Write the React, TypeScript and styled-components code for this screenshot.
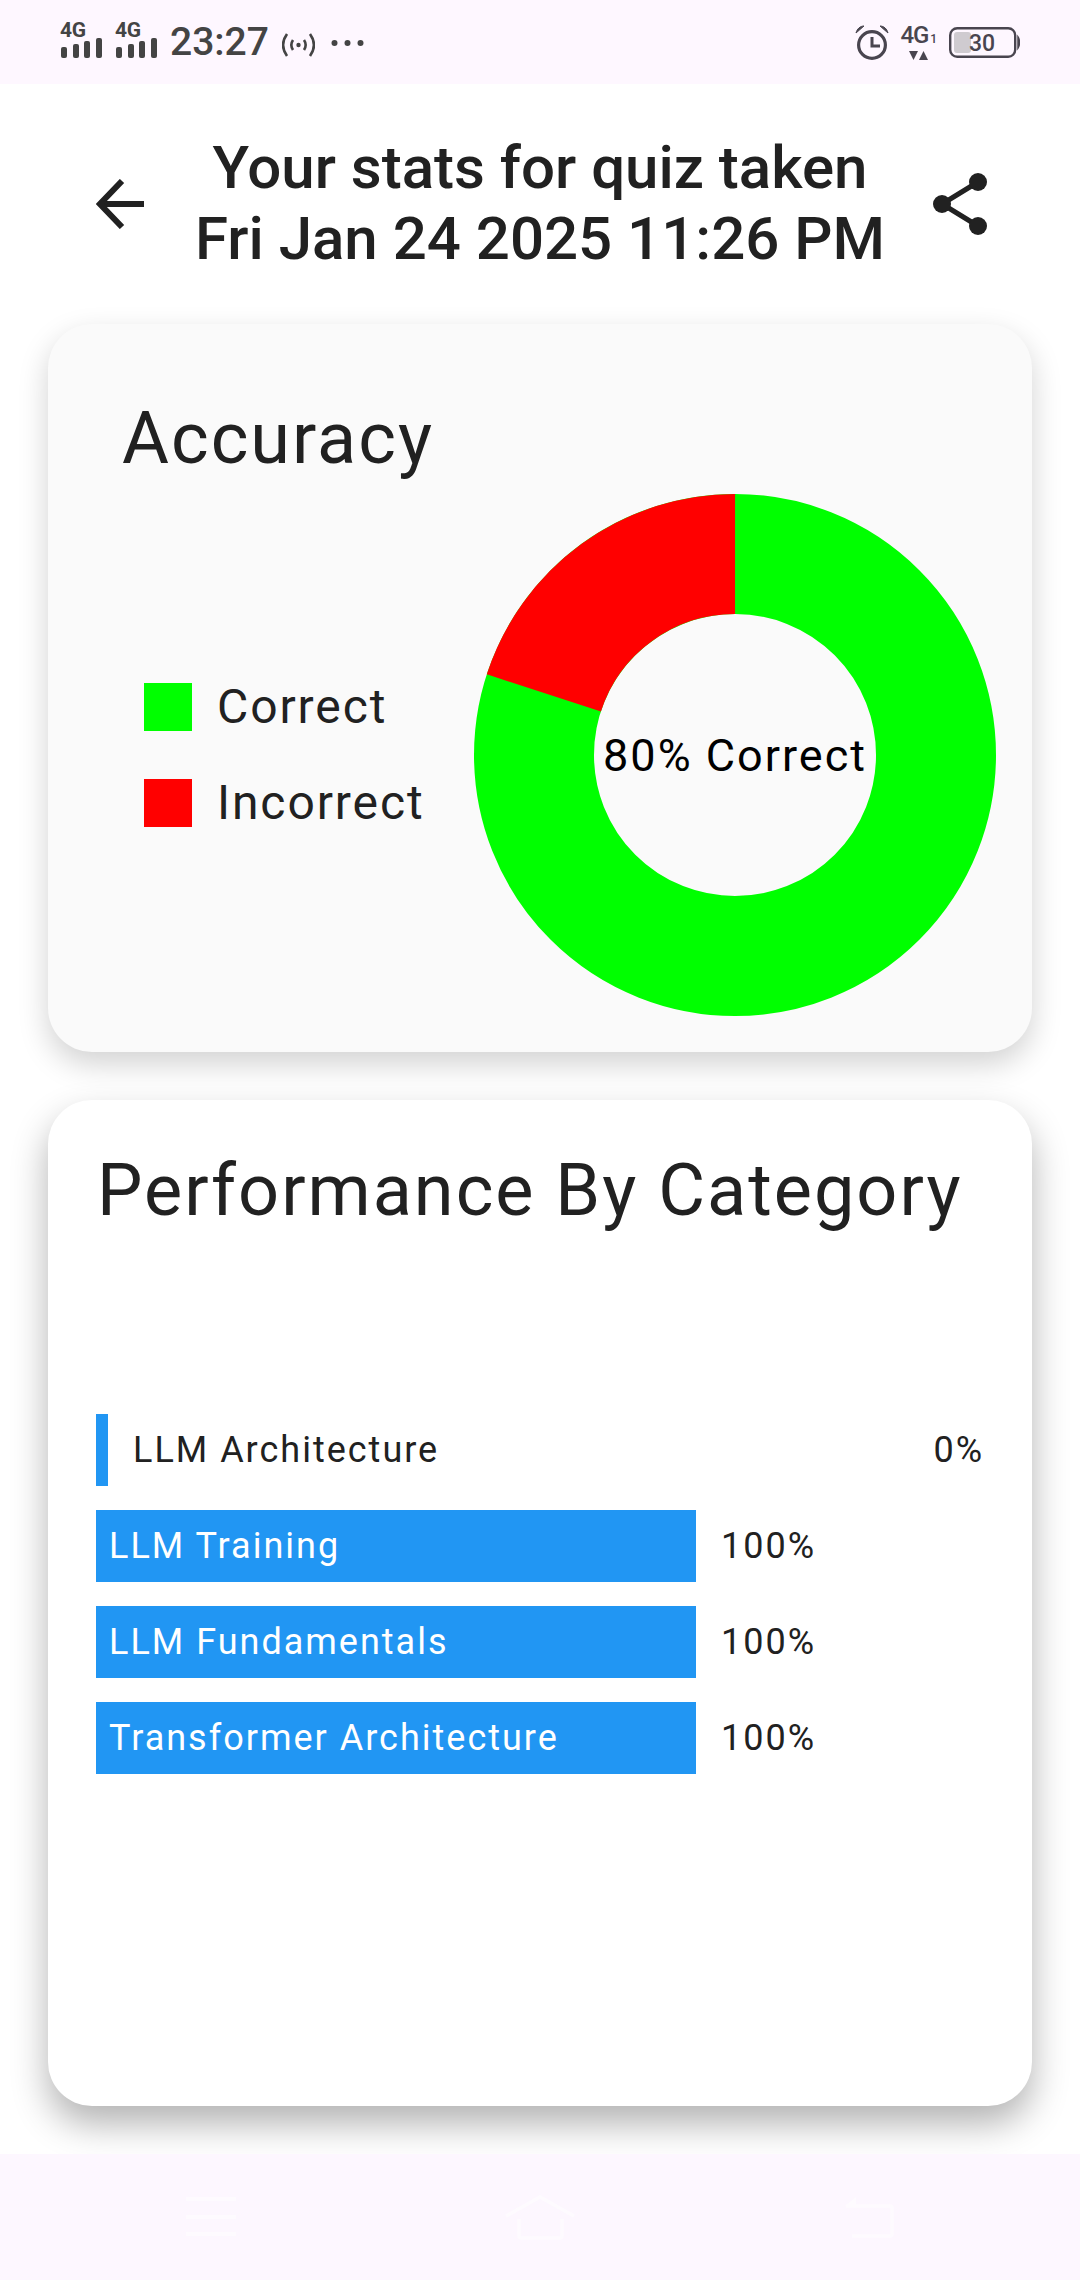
import styled, { createGlobalStyle } from 'styled-components';

const GlobalStyle = createGlobalStyle`
  html, body {
    margin: 0;
    padding: 0;
    background: #fff;
  }
  body {
    font-family: Roboto, "Liberation Sans", sans-serif;
    color: #212121;
  }
`;

const Screen = styled.div`
  width: 1080px;
  height: 2280px;
  display: flex;
  flex-direction: column;
  overflow: hidden;
  background: #fff;
`;

const StatusBar = styled.div`
  height: 84px;
  flex: none;
  background: #fef7ff;
  color: #49454f;
  display: flex;
  align-items: center;
  justify-content: space-between;
  padding: 0 60px;
  box-sizing: border-box;
`;

const StatusGroup = styled.div<{ $gap: number }>`
  display: flex;
  align-items: center;
  gap: ${p => p.$gap}px;
`;

const SignalWrap = styled.div`
  width: 42px;
  display: flex;
  flex-direction: column;
  margin-bottom: 5px;
`;

const SignalText = styled.span`
  font-size: 21px;
  line-height: 16px;
  font-weight: 700;
  letter-spacing: -0.3px;
  color: #444;
`;

const Clock = styled.span`
  font-size: 39px;
  line-height: 40px;
  font-weight: 500;
  color: #444;
`;

const WaveIcon = styled.svg`
  margin-top: 5px;
`;

const DotsIcon = styled.svg`
  margin-left: 3px;
  margin-top: 2px;
`;

const FourG = styled.div`
  display: flex;
  flex-direction: column;
  align-items: center;
`;

const FourGText = styled.span`
  font-size: 24px;
  line-height: 23px;
  font-weight: 500;
  letter-spacing: -1.2px;
  color: #49454f;

  small {
    font-size: 12px;
    letter-spacing: 0;
    margin-left: 2px;
  }
`;

const Header = styled.div`
  height: 240px;
  flex: none;
  display: flex;
  align-items: center;
  justify-content: space-between;
  padding: 0 92px;
  box-sizing: border-box;
`;

const Title = styled.h1`
  margin: 0 0 3px;
  font-size: 60px;
  line-height: 71px;
  font-weight: 500;
  text-align: center;
  color: #212121;
  white-space: nowrap;
`;

const IconButton = styled.div`
  width: 56px;
  height: 62px;
  display: flex;
  align-items: center;
  justify-content: center;
`;

const Cards = styled.div`
  flex: 1;
  padding: 0 48px;
  display: flex;
  flex-direction: column;
  gap: 48px;
`;

const Card = styled.section<{ $height: number; $bg: string; $shadow: string }>`
  height: ${p => p.$height}px;
  background: ${p => p.$bg};
  border-radius: 44px;
  box-shadow: ${p => p.$shadow};
  flex: none;
  box-sizing: border-box;
`;

const AccuracyCard = styled(Card)`
  padding: 73px 36px 0 74px;
  display: flex;
  flex-direction: column;
`;

const AccuracyTitle = styled.h2`
  margin: 0;
  font-size: 72px;
  line-height: 84px;
  font-weight: 400;
  letter-spacing: 2px;
  color: #212121;
`;

const ChartRow = styled.div`
  display: flex;
  justify-content: space-between;
  align-items: center;
  margin-top: 13px;
`;

const Legend = styled.div`
  display: flex;
  flex-direction: column;
  gap: 48px;
  margin-left: 22px;
`;

const LegendItem = styled.div`
  display: flex;
  align-items: center;
  gap: 25px;
`;

const Swatch = styled.span<{ $color: string }>`
  width: 48px;
  height: 48px;
  background: ${p => p.$color};
`;

const LegendLabel = styled.span`
  font-size: 48px;
  line-height: 48px;
  letter-spacing: 1.9px;
  color: #212121;
`;

const Donut = styled.div`
  width: 522px;
  height: 522px;
  position: relative;
`;

const DonutLabel = styled.div`
  position: absolute;
  inset: 0;
  display: flex;
  align-items: center;
  justify-content: center;
  font-size: 45px;
  letter-spacing: 2px;
  color: #000;
`;

const PerformanceCard = styled(Card)`
  padding: 49px 48px 0;
`;

const PerformanceTitle = styled.h2`
  margin: 0 0 0 1px;
  font-size: 72px;
  line-height: 84px;
  font-weight: 400;
  letter-spacing: 2px;
  color: #212121;
`;

const BarList = styled.div`
  margin-top: 181px;
  display: flex;
  flex-direction: column;
  gap: 24px;
`;

const BarRow = styled.div`
  height: 72px;
  display: flex;
  align-items: center;
`;

const BarFill = styled.div<{ $width: number }>`
  width: ${p => p.$width}px;
  height: 72px;
  flex: none;
  background: #2196f3;
  color: #fff;
  display: flex;
  align-items: center;
  white-space: nowrap;
`;

const BarText = styled.span<{ $outside?: boolean }>`
  font-size: 36px;
  letter-spacing: 2px;
  white-space: nowrap;
  margin-left: ${p => (p.$outside ? '25px' : '13px')};
  color: ${p => (p.$outside ? '#212121' : '#fff')};
`;

const BarValue = styled.span<{ $right?: boolean }>`
  font-size: 36px;
  letter-spacing: 2px;
  color: #212121;
  margin-left: ${p => (p.$right ? 'auto' : '25px')};
`;

const NavBar = styled.div`
  height: 126px;
  flex: none;
  background: #fdf7ff;
  display: flex;
  align-items: center;
  justify-content: space-between;
  padding: 0 186px;
  box-sizing: border-box;
  position: relative;
`;

const categories = [
  { name: 'LLM Architecture', value: 0 },
  { name: 'LLM Training', value: 100 },
  { name: 'LLM Fundamentals', value: 100 },
  { name: 'Transformer Architecture', value: 100 },
];

const SignalBars = () => (
  <svg width="42" height="20" viewBox="0 0 42 20" fill="#444">
    <rect x="1" y="9" width="6" height="11" rx="2" />
    <rect x="13" y="6" width="6" height="14" rx="2" />
    <rect x="24" y="3" width="6" height="17" rx="2" />
    <rect x="36" y="0" width="6" height="20" rx="2" />
  </svg>
);

const App = () => {
  return (
    <Screen>
      <GlobalStyle />
      <StatusBar>
        <StatusGroup $gap={13}>
          <SignalWrap>
            <SignalText>4G</SignalText>
            <SignalBars />
          </SignalWrap>
          <SignalWrap>
            <SignalText>4G</SignalText>
            <SignalBars />
          </SignalWrap>
          <Clock>23:27</Clock>
          <WaveIcon width="33" height="24" viewBox="0 0 33 24" fill="none" stroke="#444" strokeWidth="2.6">
            <path d="M5 1 C0 8 0 16 5 23" />
            <path d="M11 7 C9 10 9 14 11 17" />
            <circle cx="16.5" cy="12" r="2.2" fill="#444" stroke="none" />
            <path d="M22 7 C24 10 24 14 22 17" />
            <path d="M28 1 C33 8 33 16 28 23" />
          </WaveIcon>
          <DotsIcon width="33" height="8" viewBox="0 0 33 8" fill="#444">
            <circle cx="3.5" cy="4" r="3" />
            <circle cx="16.5" cy="4" r="3" />
            <circle cx="29.5" cy="4" r="3" />
          </DotsIcon>
        </StatusGroup>
        <StatusGroup $gap={12}>
          <svg width="34" height="35" viewBox="0 0 34 35" fill="none" stroke="#49454f" strokeWidth="3.2">
            <circle cx="17" cy="20" r="13.4" />
            <path d="M17 12 V21 H25" strokeWidth="3" />
            <path d="M1 8 C2 4 5 1 9 1 Z" fill="#49454f" strokeWidth="1" />
            <path d="M33 8 C32 4 29 1 25 1 Z" fill="#49454f" strokeWidth="1" />
          </svg>
          <FourG>
            <FourGText>
              4G<small>1</small>
            </FourGText>
            <svg width="19" height="10" viewBox="0 0 19 10" fill="#49454f">
              <path d="M0 0 H9 L4.5 9 Z" />
              <path d="M10 9 H19 L14.5 0 Z" />
            </svg>
          </FourG>
          <svg width="71" height="31" viewBox="0 0 71 31">
            <rect x="1.2" y="1.2" width="65" height="28.6" rx="7" fill="none" stroke="#49454f" strokeWidth="2.4" />
            <rect x="5" y="5" width="17" height="21" rx="3" fill="#cfcbd0" />
            <path d="M69 10 C71 13 71 18 69 21 Z" fill="#49454f" stroke="#49454f" strokeWidth="1.5" />
            <text x="33" y="23.5" textAnchor="middle" fontFamily="Roboto" fontSize="23" fontWeight="500" fill="#49454f">30</text>
          </svg>
        </StatusGroup>
      </StatusBar>

      <Header>
        <IconButton>
          <svg width="48" height="50" viewBox="0 0 48 50" fill="none" stroke="#212121" strokeWidth="6">
            <path d="M48 25 H4" />
            <path d="M26 2 L4 25 L26 48" />
          </svg>
        </IconButton>
        <Title>
          Your stats for quiz taken
          <br />
          Fri Jan 24 2025 11:26 PM
        </Title>
        <IconButton>
          <svg width="54" height="62" viewBox="0 0 54 62" fill="#212121" stroke="#212121">
            <path d="M45 9 L9 31 L45 53" fill="none" strokeWidth="5" />
            <circle cx="45" cy="9" r="9" stroke="none" />
            <circle cx="9" cy="31" r="9" stroke="none" />
            <circle cx="45" cy="53" r="9" stroke="none" />
          </svg>
        </IconButton>
      </Header>

      <Cards>
        <AccuracyCard $height={728} $bg="#fafafa" $shadow="0 12px 30px rgba(0, 0, 0, 0.18)">
          <AccuracyTitle>Accuracy</AccuracyTitle>
          <ChartRow>
            <Legend>
              <LegendItem>
                <Swatch $color="#00ff00" />
                <LegendLabel>Correct</LegendLabel>
              </LegendItem>
              <LegendItem>
                <Swatch $color="#ff0000" />
                <LegendLabel>Incorrect</LegendLabel>
              </LegendItem>
            </Legend>
            <Donut>
              <svg width="522" height="522" viewBox="0 0 522 522" fill="none" strokeWidth="120">
                <circle cx="261" cy="261" r="201" stroke="#00ff00" />
                <circle
                  cx="261"
                  cy="261"
                  r="201"
                  stroke="#ff0000"
                  pathLength={100}
                  strokeDasharray="20 80"
                  transform="rotate(-162 261 261)"
                />
              </svg>
              <DonutLabel>80% Correct</DonutLabel>
            </Donut>
          </ChartRow>
        </AccuracyCard>

        <PerformanceCard $height={1006} $bg="#ffffff" $shadow="0 18px 36px rgba(0, 0, 0, 0.3)">
          <PerformanceTitle>Performance By Category</PerformanceTitle>
          <BarList>
            {categories.map(c => (
              <BarRow key={c.name}>
                {c.value > 0 ? (
                  <>
                    <BarFill $width={600}>
                      <BarText>{c.name}</BarText>
                    </BarFill>
                    <BarValue>{c.value}%</BarValue>
                  </>
                ) : (
                  <>
                    <BarFill $width={12} />
                    <BarText $outside>{c.name}</BarText>
                    <BarValue $right>{c.value}%</BarValue>
                  </>
                )}
              </BarRow>
            ))}
          </BarList>
        </PerformanceCard>
      </Cards>

      <NavBar>
        <svg width="50" height="40" viewBox="0 0 50 40" fill="#fefbff">
          <rect y="0" width="50" height="4" />
          <rect y="18" width="50" height="4" />
          <rect y="35" width="50" height="4" />
        </svg>
        <svg width="70" height="45" viewBox="0 0 70 45" fill="none" stroke="#fefbff" strokeWidth="3.5">
          <path d="M1 21 L35 2 L69 21" />
          <path d="M14 24 V41 Q14 43 17 43 H54 Q57 43 57 41 V24" />
        </svg>
        <svg width="50" height="42" viewBox="0 0 50 42" fill="none" stroke="#fefbff" strokeWidth="3.5">
          <path d="M2 10 H46 Q48 10 48 12 V38 Q48 40 46 40 H8" />
          <path d="M1 10 L12 1 V10 Z" fill="#fefbff" stroke="none" />
        </svg>
      </NavBar>
    </Screen>
  );
};

export default App;
